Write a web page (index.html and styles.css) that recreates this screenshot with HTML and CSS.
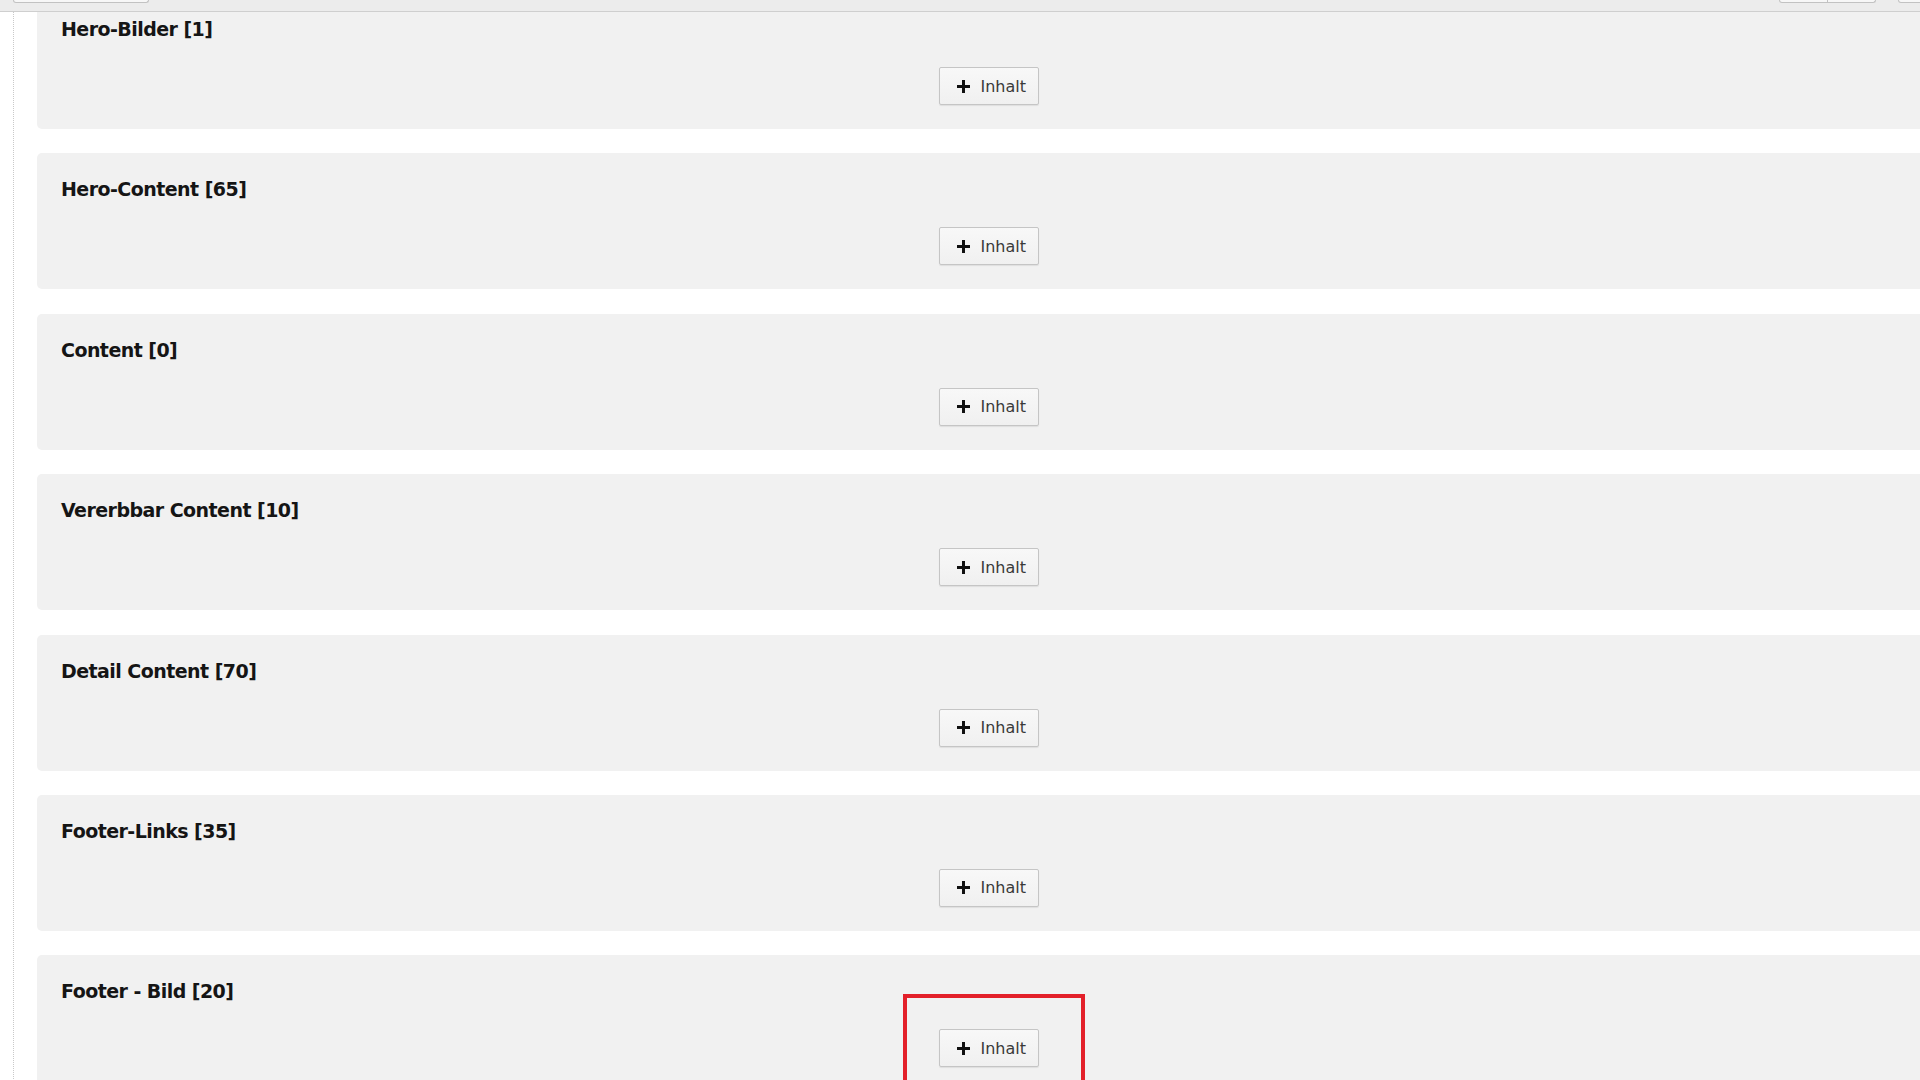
FILE: index.html
```html
<!DOCTYPE html>
<html lang="de">
<head>
<meta charset="utf-8">
<title>Seitenansicht</title>
<link rel="stylesheet" href="styles.css">
</head>
<body>
<div class="page">
  <div class="topbar">
    <div class="tb-left"><span class="tb-btn tb-wide"></span></div>
    <div class="tb-right">
      <span class="tb-group"><span class="tb-btn tb-half"></span><span class="tb-btn tb-half"></span></span>
      <span class="tb-btn tb-cut"></span>
    </div>
  </div>
  <div class="main">
    <div class="tree">
      <section class="panel first">
        <h2 class="panel-title">Hero-Bilder [1]</h2>
        <button class="add-btn"><svg class="plus" viewBox="0 0 15 15"><path d="M7.5 1v13M1 7.5h13"/></svg><span>Inhalt</span></button>
      </section>
      <section class="panel">
        <h2 class="panel-title">Hero-Content [65]</h2>
        <button class="add-btn"><svg class="plus" viewBox="0 0 15 15"><path d="M7.5 1v13M1 7.5h13"/></svg><span>Inhalt</span></button>
      </section>
      <section class="panel">
        <h2 class="panel-title">Content [0]</h2>
        <button class="add-btn"><svg class="plus" viewBox="0 0 15 15"><path d="M7.5 1v13M1 7.5h13"/></svg><span>Inhalt</span></button>
      </section>
      <section class="panel">
        <h2 class="panel-title">Vererbbar Content [10]</h2>
        <button class="add-btn"><svg class="plus" viewBox="0 0 15 15"><path d="M7.5 1v13M1 7.5h13"/></svg><span>Inhalt</span></button>
      </section>
      <section class="panel">
        <h2 class="panel-title">Detail Content [70]</h2>
        <button class="add-btn"><svg class="plus" viewBox="0 0 15 15"><path d="M7.5 1v13M1 7.5h13"/></svg><span>Inhalt</span></button>
      </section>
      <section class="panel">
        <h2 class="panel-title">Footer-Links [35]</h2>
        <button class="add-btn"><svg class="plus" viewBox="0 0 15 15"><path d="M7.5 1v13M1 7.5h13"/></svg><span>Inhalt</span></button>
      </section>
      <section class="panel">
        <h2 class="panel-title">Footer - Bild [20]</h2>
        <button class="add-btn"><svg class="plus" viewBox="0 0 15 15"><path d="M7.5 1v13M1 7.5h13"/></svg><span>Inhalt</span></button>
      </section>
    </div>
  </div>
  <div class="highlight"></div>
</div>
</body>
</html>
```
FILE: styles.css
```css
html, body {
  margin: 0;
  padding: 0;
  height: 100%;
  overflow: hidden;
  background: #ffffff;
  font-family: "DejaVu Sans", Verdana, sans-serif;
}

.page {
  position: relative;
  display: flex;
  flex-direction: column;
  height: 100vh;
  overflow: hidden;
}

.topbar {
  height: 11px;
  flex: 0 0 auto;
  background: #ececec;
  border-bottom: 1px solid #cfcfcf;
  display: flex;
  justify-content: space-between;
  align-items: flex-start;
  padding-left: 13px;
  position: relative;
  z-index: 2;
}

.tb-left, .tb-right {
  display: flex;
  align-items: flex-start;
}

.tb-right {
  gap: 22px;
  margin-right: -30px;
}

.tb-group {
  display: flex;
}

.tb-btn {
  display: block;
  height: 2px;
  background: #f7f7f7;
  border: 1px solid #c2c2c2;
  border-top: none;
  border-radius: 0 0 3px 3px;
}

.tb-wide { width: 134px; }
.tb-half { width: 47px; }
.tb-half + .tb-half { border-left: none; border-radius: 0 0 3px 0; }
.tb-group .tb-half:first-child { border-radius: 0 0 0 3px; }
.tb-cut { width: 50px; }

.main {
  flex: 1 1 auto;
  overflow: hidden;
}

.tree {
  margin-left: 13px;
  border-left: 1px dotted #c9c9c9;
  padding-left: 23px;
  margin-right: -20px;
  min-height: 100%;
  display: flex;
  flex-direction: column;
  gap: 24.4px;
}

.panel {
  flex: 0 0 auto;
  height: 136px;
  box-sizing: border-box;
  background: #f1f1f1;
  border-radius: 5px 0 0 5px;
  padding: 25px 24px 0 24px;
  display: flex;
  flex-direction: column;
}

.panel.first {
  margin-top: -19px;
}

.panel-title {
  margin: 0;
  font-size: 19px;
  line-height: 22px;
  font-weight: bold;
  letter-spacing: -0.55px;
  color: #151515;
}

.add-btn {
  align-self: center;
  margin-top: 27px;
  width: 100px;
  height: 38px;
  box-sizing: border-box;
  display: flex;
  align-items: center;
  padding: 0 0 0 16px;
  gap: 10px;
  background: linear-gradient(#f8f8f8, #f0f0f0);
  border: 1px solid #c5c5c5;
  border-radius: 2px;
  box-shadow: 0 1px 1px rgba(0,0,0,0.08);
  font-family: "DejaVu Sans", Verdana, sans-serif;
  font-size: 16px;
  color: #3a3a3a;
  cursor: pointer;
}

.plus {
  width: 15px;
  height: 15px;
  flex: 0 0 auto;
}

.plus path {
  stroke: #111111;
  stroke-width: 3;
  fill: none;
}

.highlight {
  position: absolute;
  left: 903px;
  top: 994px;
  width: 182px;
  height: 140px;
  box-sizing: border-box;
  border: 4px solid #e3202a;
  pointer-events: none;
}
```
